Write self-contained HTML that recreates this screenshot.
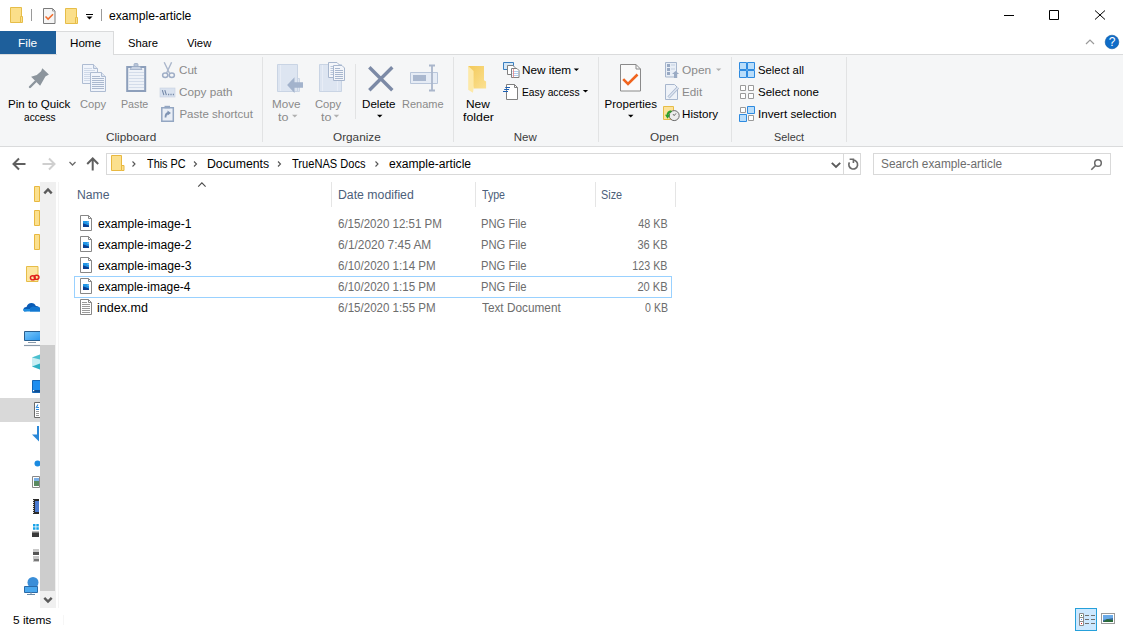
<!DOCTYPE html>
<html><head><meta charset="utf-8">
<style>
html,body{margin:0;padding:0;}
body{width:1125px;height:632px;overflow:hidden;position:relative;background:#fff;font-family:"Liberation Sans",sans-serif;}
.tx{position:absolute;white-space:nowrap;line-height:14px;font-family:"Liberation Sans",sans-serif;}
.a{position:absolute;}
svg{position:absolute;overflow:visible;}
</style></head><body>
<!-- ===== title bar ===== -->
<svg style="left:0;top:0" width="1125" height="31">
  <!-- folder 1 -->
  <path d="M10.5 7.5h11v15h-11z" fill="#fbdf8a" stroke="#e6bd48"/>
  <path d="M20.5 16.5h2v6h-2z" fill="#fbdf8a" stroke="#e6bd48"/>
  <!-- sep -->
  <path d="M31.5 9v12" stroke="#9a9a9a"/>
  <!-- properties -->
  <path d="M43.5 8.5h9l2.5 2.5v12.5h-11.5z" fill="#f5f5f5" stroke="#7a7a7a"/>
  <path d="M52.5 8.5v2.5h2.5" fill="none" stroke="#9a9a9a"/>
  <path d="M45.5 16.5l2.6 2.6 4.9-4.9" fill="none" stroke="#f06a2a" stroke-width="1.5"/>
  <!-- folder 2 -->
  <path d="M65.5 8.5h11v15h-11z" fill="#fbdf8a" stroke="#e6bd48"/>
  <path d="M75.5 17.5h2v6h-2z" fill="#fbdf8a" stroke="#e6bd48"/>
  <!-- dropdown -->
  <path d="M86 14.5h7" stroke="#000"/>
  <path d="M86.5 16.5h6l-3 3z" fill="#000"/>
  <path d="M101.5 9v12" stroke="#9a9a9a"/>
  <!-- window controls -->
  <path d="M1004 15.5h10" stroke="#000"/>
  <path d="M1049.5 10.5h9v9h-9z" fill="none" stroke="#000"/>
  <path d="M1095 10.5l10 9M1105 10.5l-10 9" stroke="#000"/>
</svg>
<!-- ===== tabs ===== -->
<div class="a" style="left:0;top:31px;width:56px;height:23px;background:#1e5f9b"></div>
<div class="a" style="left:56px;top:31px;width:58px;height:24px;background:#f5f6f7;border-top:1px solid #dadbdc;border-right:1px solid #dadbdc;box-sizing:border-box;"></div>
<svg style="left:1080px;top:30px" width="45" height="24">
  <path d="M6 14l4-4 4 4" fill="none" stroke="#9a9a9a" stroke-width="1.2"/>
  <circle cx="32" cy="12" r="6.8" fill="#0f6cc8" stroke="#0a559e" stroke-width="0.6"/>
  <text x="32" y="16.3" font-family="Liberation Sans" font-size="12" fill="#fff" text-anchor="middle">?</text>
</svg>
<!-- ===== ribbon ===== -->
<div class="a" style="left:0;top:54px;width:1123px;height:93px;background:#f5f6f7;border-top:1px solid #dadbdc;border-bottom:1px solid #dadbdc;box-sizing:border-box;"></div>
<div class="a" style="left:57px;top:54px;width:56px;height:1px;background:#f5f6f7"></div>
<!-- group separators -->
<div class="a" style="left:262px;top:57px;width:1px;height:85px;background:#e2e3e4"></div>
<div class="a" style="left:355px;top:64px;width:1px;height:55px;background:#e2e3e4"></div>
<div class="a" style="left:453px;top:57px;width:1px;height:85px;background:#e2e3e4"></div>
<div class="a" style="left:598px;top:57px;width:1px;height:85px;background:#e2e3e4"></div>
<div class="a" style="left:731px;top:57px;width:1px;height:85px;background:#e2e3e4"></div>
<div class="a" style="left:846px;top:57px;width:1px;height:85px;background:#e2e3e4"></div>
<svg style="left:0;top:0" width="1125" height="150">
  <!-- pin -->
  <path d="M42.3 68.2L48.9 74.4L45.4 76.6L42 82.4L40.1 85.7L31.1 76.7L36.8 75L41.1 71.3Z" fill="#8c959d"/>
  <path d="M35.5 81.5L30 87" stroke="#8c959d" stroke-width="2.4" stroke-linecap="round"/>
  <!-- copy -->
  <path d="M82.5 64.5h11l4 4v15h-15z" fill="#f0f4fb" stroke="#aebcd2"/>
  <path d="M93.5 64.5v4h4" fill="#dfe6f1" stroke="#aebcd2"/>
  <path d="M84 68.5h8M84 70.5h11M84 72.5h11M84 74.5h11M84 76.5h11M84 78.5h11M84 80.5h11" stroke="#cfd9e8"/>
  <path d="M90.5 72.5h11l4 4v15h-15z" fill="#f0f4fb" stroke="#aebcd2"/>
  <path d="M101.5 72.5v4h4" fill="#dfe6f1" stroke="#aebcd2"/>
  <path d="M92 76.5h8M92 78.5h12M92 80.5h12M92 82.5h12M92 84.5h12M92 86.5h12M92 88.5h12" stroke="#aab8ce"/>
  <!-- paste -->
  <path d="M127.2 67h18v24h-18z" fill="#eef2f8" stroke="#8d9fbb" stroke-width="2"/>
  <path d="M128.5 72.5h15.5M128.5 75.5h15.5M128.5 78.5h15.5M128.5 81.5h15.5M128.5 84.5h15.5M128.5 87.5h15.5" stroke="#d3dcea"/>
  <path d="M130 69.5L132 66.5H140L142 69.5z" fill="#c9d3e3" stroke="#9aabc4" stroke-width="0.8"/>
  <path d="M134 66.5v-2a1 1 0 0 1 1-1h2a1 1 0 0 1 1 1v2z" fill="#b7c4d8" stroke="#9aabc4" stroke-width="0.8"/>
  <!-- cut -->
  <path d="M164.2 62.2l5.2 10.8M171.6 62.2l-5 10.8" stroke="#aab6cb" stroke-width="1.4"/>
  <ellipse cx="165.2" cy="75.2" rx="2.6" ry="2.2" fill="none" stroke="#9eadc6" stroke-width="1.5"/>
  <ellipse cx="171.8" cy="75.2" rx="2.6" ry="2.2" fill="none" stroke="#9eadc6" stroke-width="1.5"/>
  <!-- copy path -->
  <rect x="160" y="88" width="15" height="9" fill="#d9e2ef" stroke="#c5d1e2" stroke-width="0.6"/>
  <path d="M162.3 90.2l1.6 5M164.8 90.2l1.6 5" stroke="#7488a8" stroke-width="1.1"/>
  <path d="M168 94.5h1.2M170.4 94.5h1.2M172.8 94.5h1.2" stroke="#7488a8" stroke-width="1.3"/>
  <!-- paste shortcut -->
  <path d="M161.8 107.8h11.5v13.5h-11.5z" fill="#e9eef6" stroke="#93a6c2" stroke-width="1.5"/>
  <path d="M164.5 105.8h5.5v2.5h-5.5z" fill="#93a6c2"/>
  <path d="M165.5 117.5c0-3 1-4.5 3.5-4.5" fill="none" stroke="#7e93b3" stroke-width="1.8"/>
  <path d="M167.5 110.5l3.5 2.5-3.5 2.5z" fill="#7e93b3"/>
  <!-- move to -->
  <path d="M297.5 78.5h2v13h-2z" fill="#dfe6f1" stroke="#ccd6e5"/>
  <path d="M277.5 64.5h20v27h-20z" fill="#dde5f1" stroke="#c9d4e4"/>
  <path d="M280.5 65v26" stroke="#e8edf6"/>
  <path d="M287.1 85L294.5 77.2V82.2H303V87.7H294.5V93z" fill="#a3b3cc"/>
  <!-- copy to -->
  <path d="M319.5 64.5h22v27h-22z" fill="#dde5f1" stroke="#c9d4e4"/>
  <path d="M322.5 65v26M337.5 65v26" stroke="#e8edf6"/>
  <path d="M328.5 62.5h8.5l2.5 2.5v12.5h-11z" fill="#f4f6fa" stroke="#a8b7ce"/>
  <path d="M330.5 66.5h4M330.5 68.5h4M330.5 70.5h4M330.5 72.5h4M330.5 74.5h4" stroke="#b9c6da"/>
  <path d="M333.5 65.5h8.5l2.5 2.5v12.5h-11z" fill="#f4f6fa" stroke="#a8b7ce"/>
  <path d="M335 68.5h5M335 70.5h8M335 72.5h8M335 74.5h8M335 76.5h8M335 78.5h8" stroke="#a8b7ce"/>
  <path d="M292 114.8h5.5l-2.75 2.7z" fill="#b0b0b0"/>
  <path d="M333.7 114.8h5.5l-2.75 2.7z" fill="#b0b0b0"/>
  <!-- delete -->
  <path d="M369.3 67.2l23 23M392.3 67.2l-23 23" stroke="#7c8aa6" stroke-width="3.4"/>
  <path d="M377 114.8h5.5l-2.75 2.7z" fill="#000"/>
  <!-- rename -->
  <path d="M410.5 72.5h27v11h-27z" fill="#e6ecf5" stroke="#b9c6da"/>
  <path d="M413 75h13v6h-13z" fill="#aab8cf"/>
  <path d="M432 65.5v25M429 65.5h6M429 90.5h6" stroke="#aab6cb" stroke-width="1.8"/>
  <!-- new folder -->
  <defs><linearGradient id="fg" x1="0" y1="0" x2="1" y2="1"><stop offset="0" stop-color="#f3c95a"/><stop offset="1" stop-color="#fbe192"/></linearGradient></defs>
  <path d="M468.2 66H484V80.3L486.1 81.5V88.6H473.6z" fill="url(#fg)"/>
  <path d="M468.2 66L473.6 71V88.6L472.9 92.8L468.2 89.7z" fill="#fde9a8"/>
  <!-- new item -->
  <path d="M503.5 62.5h10v7h-10z" fill="#d5e8f8" stroke="#3a7fc0"/>
  <path d="M507.5 65.5h5.5l2 2v7h-7.5z" fill="#fff" stroke="#808080"/>
  <path d="M511.5 68.5h5.5l2 2v7h-7.5z" fill="#fff" stroke="#808080"/>
  <path d="M512.5 71.5h6M512.5 73.5h6M512.5 75.5h6" stroke="#9cc0e8" stroke-width="0.8"/>
  <path d="M513.5 69v8.5" stroke="#e88080" stroke-width="0.8"/>
  <path d="M573.7 68.4h5.3l-2.65 2.6z" fill="#000"/>
  <!-- easy access -->
  <path d="M506.5 84.5h8l3 3v12h-11z" fill="#fff" stroke="#808080"/>
  <path d="M514.5 84.5v3h3" fill="none" stroke="#808080"/>
  <path d="M505.3 87.5h4.7M504.2 89.5h4.9M503 91.5h5" stroke="#1a5fb4" stroke-width="1"/>
  <path d="M582.8 90h5.3l-2.65 2.6z" fill="#000"/>
  <!-- properties -->
  <path d="M620.5 64.5h15.5l4.5 4.5v22h-20z" fill="#fafafa" stroke="#8a8a8a"/>
  <path d="M636 64.5v4.5h4.5" fill="none" stroke="#8a8a8a"/>
  <path d="M623.2 79.2L628 84L637.5 74.5" fill="none" stroke="#f0641e" stroke-width="2.6"/>
  <path d="M628 114.8h5.5l-2.75 2.7z" fill="#000"/>
  <!-- open -->
  <path d="M665.5 62.5h11v14.5h-11z" fill="#e8eef6" stroke="#a7b6cd"/>
  <path d="M667 64h3v3h-3zM667 68h3v3h-3zM667 72h3v3h-3z" fill="#98a9c3"/>
  <path d="M671 65h4M671 69h4" stroke="#c3cfe0"/>
  <path d="M674 78v-4h-2l3.6-3 3.6 3h-2v4z" fill="#9aabc4"/>
  <path d="M716 68.4h5.3l-2.65 2.6z" fill="#b0b0b0"/>
  <!-- edit -->
  <path d="M665.5 84.5h9l3 3v12h-12z" fill="#eef2f8" stroke="#a7b6cd"/>
  <path d="M668.5 97.5l9.5-10" stroke="#a7b6cd" stroke-width="3"/><path d="M668.5 97.5l9.5-10" stroke="#dfe6f1" stroke-width="1.4"/>
  <!-- history -->
  <path d="M663.5 106.5h10v13h-10z" fill="#fde39a" stroke="#e6bd48"/>
  <circle cx="674.2" cy="115.6" r="5" fill="#ececec" stroke="#6a6a6a"/>
  <path d="M674.2 115.6l1.8-2.2M674.2 115.6l-1.2-1.5" stroke="#444" stroke-width="0.8"/>
  <path d="M671.5 111.2c-2.5.3-4 2-4 4.3" fill="none" stroke="#2ca02c" stroke-width="2"/>
  <path d="M665 114.8h5.2l-2.6 4z" fill="#2ca02c"/>
  <!-- select all -->
  <path d="M739.5 62.5h7v7h-7zM747.5 62.5h7v7h-7zM739.5 70.5h7v7h-7zM747.5 70.5h7v7h-7z" fill="#b9ddfa" stroke="#2d8ae0"/>
  <!-- select none -->
  <path d="M740.5 85.5h5v5h-5zM748.5 85.5h5v5h-5zM740.5 93.5h5v5h-5zM748.5 93.5h5v5h-5z" fill="#fff" stroke="#9a9a9a"/>
  <!-- invert -->
  <path d="M740.5 107.5h5v5h-5zM748.5 115.5h5v5h-5z" fill="#fff" stroke="#9a9a9a"/>
  <path d="M747.5 106.5h7v7h-7zM739.5 114.5h7v7h-7z" fill="#b9ddfa" stroke="#2d8ae0"/>
</svg>
<!-- ===== address row ===== -->
<svg style="left:0;top:146px" width="1125" height="40">
  <path d="M13.5 18h12M19 12.5L13.5 18l5.5 5.5" fill="none" stroke="#5f5f5f" stroke-width="2"/>
  <path d="M42.5 18h12M49 12.5l5.5 5.5-5.5 5.5" fill="none" stroke="#cfcfcf" stroke-width="2"/>
  <path d="M69.5 16l3 3 3-3" fill="none" stroke="#6a6a6a" stroke-width="1.3"/>
  <path d="M92.7 24.5V12.5M87.2 18l5.5-5.5 5.5 5.5" fill="none" stroke="#5f5f5f" stroke-width="2"/>
  <!-- address box -->
  <rect x="106.5" y="7.5" width="754" height="21" fill="#fff" stroke="#d9d9d9"/>
  <path d="M843.5 7.5v21" stroke="#d9d9d9"/>
  <path d="M111.5 9.5h10v15h-10z" fill="#fbe08e" stroke="#e8b840"/>
  <path d="M121.5 19.5h2.5v5h-2.5z" fill="#fbe08e" stroke="#e8b840"/>
  <path d="M132.5 15.5l2.5 2.5-2.5 2.5M194 15.5l2.5 2.5-2.5 2.5M278 15.5l2.5 2.5-2.5 2.5M375.5 15.5l2.5 2.5-2.5 2.5" fill="none" stroke="#555" stroke-width="1.1"/>
  <path d="M831.8 16.8l4.2 4.2 4.2-4.2" fill="none" stroke="#5a5a5a" stroke-width="1.9"/>
  <path d="M853.2 14.2A4.4 4.4 0 1 1 849.4 16.4" fill="none" stroke="#6a6a6a" stroke-width="1.7"/>
  <path d="M849.6 13.3H853.4V17" fill="none" stroke="#6a6a6a" stroke-width="1.6"/>
  <!-- search box -->
  <rect x="873.5" y="7.5" width="237" height="21" fill="#fff" stroke="#d9d9d9"/>
  <circle cx="1098" cy="17" r="3.3" fill="none" stroke="#6a6a6a" stroke-width="1.5"/>
  <path d="M1095.6 19.5l-4.3 4.3" stroke="#6a6a6a" stroke-width="1.6"/>
</svg>
<!-- ===== nav pane ===== -->
<div class="a" style="left:0;top:398px;width:40px;height:24px;background:#d9d9d9"></div>
<div class="a" style="left:40px;top:182px;width:16px;height:426px;background:#f0f0f0"></div>
<div class="a" style="left:40px;top:345px;width:15px;height:246px;background:#cdcdcd"></div>
<div class="a" style="left:58px;top:182px;width:1px;height:426px;background:#f4f4f4"></div>
<svg style="left:0;top:0" width="60" height="632">
  <path d="M44.3 193.3l3.7-3.8 3.7 3.8" fill="none" stroke="#5a5a5a" stroke-width="2.4"/>
  <path d="M44.3 597.8l3.7 3.8 3.7-3.8" fill="none" stroke="#5a5a5a" stroke-width="2.4"/>
</svg>
<svg style="left:0;top:0;overflow:hidden" width="40" height="632">
  <path d="M34.5 186.5h5v15h-5zM34.5 210.5h5v15h-5zM34.5 234.5h5v15h-5z" fill="#fbe08e" stroke="#e8b840"/>
  <!-- creative cloud -->
  <path d="M26.5 266.5h11.5v15h-11.5z" fill="#fde6a0" stroke="#e6bd48"/>
  <ellipse cx="32.8" cy="277.8" rx="2.4" ry="2.1" fill="none" stroke="#e0201c" stroke-width="1.4"/>
  <ellipse cx="36.6" cy="277.3" rx="2.4" ry="2.1" fill="none" stroke="#e0201c" stroke-width="1.4"/>
  <!-- onedrive -->
  <path d="M24.5 311.5c-1-.3-1.2-1.5-1-2.5.3-1.4 1.5-2.2 3-2.1.8-2.4 2.6-3.8 5-3.8 2.1 0 3.6 1.1 4.4 2.8 1.8-.1 3.6.9 4.1 2.9z" fill="#0a5bb5"/>
  <path d="M24.5 311.5c-1-.3-1.3-1.4-1-2.5h17v2.5z" fill="#1c8de0"/>
  <path d="M30 308c1.5-1.5 4-2 6-1 2-.5 4 0 5 2v2.5h-11z" fill="#1477d0"/>
  <!-- this pc -->
  <defs><linearGradient id="pcg" x1="0" y1="0" x2="1" y2="1"><stop offset="0" stop-color="#7cc8fa"/><stop offset="1" stop-color="#2896ee"/></linearGradient></defs>
  <path d="M24.5 331.5h16v9h-16z" fill="url(#pcg)" stroke="#2a5f8f"/>
  <path d="M28 342.5h8" stroke="#8a9aaa"/>
  <path d="M24 345.5h16" stroke="#8a9aaa" stroke-width="1.2"/>
  <!-- 3d objects -->
  <path d="M32 357.5L40 354.5V369.5L32 366.5z" fill="#c8eef3"/>
  <path d="M32 357.5L40 354.5V359.5z" fill="#4cc0cf"/>
  <path d="M32 366.5L40 363.5V369.5z" fill="#2eb0c4"/>
  <!-- desktop -->
  <path d="M32.5 380.5h8v12h-8z" fill="#1e8ef0" stroke="#1565b5"/>
  <path d="M33 390h7v2h-7z" fill="#0d4f95"/>
  <rect x="33" y="390" width="1.2" height="1.2" fill="#fff"/>
  <!-- documents -->
  <path d="M34.5 402.5h6v15h-6z" fill="#fff" stroke="#6a6a6a"/>
  <path d="M36 408l2-3.5M37 407.5h2" stroke="#2a8ae0" stroke-width="1.1"/>
  <path d="M36 409.5h3" stroke="#2a8ae0"/>
  <path d="M36 411.5h3M36 413.5h3M36 415.5h3" stroke="#9a9a9a"/>
  <!-- downloads -->
  <path d="M32 434.5h7v7z" fill="#2b88d8"/><path d="M37 426h2v9h-2z" fill="#2b88d8"/>
  <!-- music -->
  <circle cx="37.5" cy="463.5" r="3" fill="#1a8ae0"/>
  <!-- pictures -->
  <path d="M32.5 476.5h7v11h-7z" fill="#fff" stroke="#888"/>
  <path d="M34 478h5v8h-5z" fill="#5a8a60"/>
  <path d="M34 478h5v3h-5z" fill="#7ab0e8"/>
  <!-- videos -->
  <path d="M33 499h6v15h-6z" fill="#2a2a2a"/>
  <path d="M35 501h4v11h-4z" fill="#4a7ad0"/>
  <path d="M33.5 500v13" stroke="#ddd" stroke-dasharray="1 1"/>
  <!-- windows drive -->
  <path d="M33 524h2.5v2.5H33zM36.3 524h2.5v2.5h-2.5zM33 527.3h2.5v2.5H33zM36.3 527.3h2.5v2.5h-2.5z" fill="#19a3e8"/>
  <path d="M32 531h7v6h-7z" fill="#3a3a3a"/>
  <path d="M32 531h7v1.5h-7z" fill="#bbb"/>
  <!-- drive 2 -->
  <path d="M33 549h6v6h-6z" fill="#c8c8c8"/>
  <path d="M33 552h6v3h-6z" fill="#555"/>
  <path d="M33 556h6v6h-6z" fill="#c8c8c8"/>
  <path d="M34 559h5v2h-5z" fill="#777"/>
  <!-- network -->
  <circle cx="33" cy="582.5" r="5.5" fill="#3a8ed8"/>
  <path d="M24.5 586.5h13v6h-13z" fill="#4aa8ee" stroke="#2a6aa8"/>
  <path d="M27 594.5h8M31 592v2.5" stroke="#6a8aa8"/>
</svg>
<!-- ===== column headers ===== -->
<div class="a" style="left:331px;top:182px;width:1px;height:25px;background:#e5e5e5"></div>
<div class="a" style="left:475px;top:182px;width:1px;height:25px;background:#e5e5e5"></div>
<div class="a" style="left:595px;top:182px;width:1px;height:25px;background:#e5e5e5"></div>
<div class="a" style="left:675px;top:182px;width:1px;height:25px;background:#e5e5e5"></div>
<svg style="left:0;top:0" width="700" height="320">
  <path d="M198.2 186.6l3.7-3.7 3.7 3.7" fill="none" stroke="#4a4a4a" stroke-width="1.1"/>
  <!-- selection focus rect row 4 -->
  <rect x="74.5" y="276.5" width="597" height="21" fill="none" stroke="#99d1ff"/>
  <!-- image file icons -->
  <g id="ficon">
    <path d="M80.5 215.5h8l3 3v12h-11z" fill="#fff" stroke="#878787"/>
    <path d="M88.5 215.5v3h3" fill="none" stroke="#878787"/>
    <rect x="83" y="221" width="6" height="6" fill="#2196e6"/>
    <path d="M83 223.3L89 225.5V227H83z" fill="#0b3f92"/>
    <rect x="87.6" y="221.6" width="1" height="1" fill="#dff0ff"/>
  </g>
  <use href="#ficon" y="21"/>
  <use href="#ficon" y="42"/>
  <use href="#ficon" y="63"/>
  <!-- text icon -->
  <path d="M80.5 299.5h8l3 3v12h-11z" fill="#fff" stroke="#878787"/>
  <path d="M88.5 299.5v3h3" fill="none" stroke="#878787"/>
  <path d="M82 302.5h5M82 304.5h8M82 306.5h8M82 308.5h8M82 310.5h8M82 312.5h8" stroke="#9a9a9a"/>
</svg>
<!-- ===== status bar ===== -->
<div class="a" style="left:63px;top:615px;width:1px;height:10px;background:#f6f6f6"></div>
<div class="a" style="left:1075px;top:608px;width:22px;height:23px;background:#cce8ff;border:1px solid #26a0da;box-sizing:border-box"></div>
<svg style="left:0;top:0" width="1125" height="632">
  <path d="M1079.5 613.5h4v12h-4z" fill="#fff" stroke="#8a8a8a"/>
  <path d="M1079.5 617.5h4M1079.5 621.5h4" stroke="#8a8a8a"/><rect x="1081" y="615" width="1" height="1" fill="#2e7d4a"/><rect x="1081" y="619" width="1" height="1" fill="#4a8ef0"/><rect x="1081" y="623" width="1" height="1" fill="#e02020"/>
  <path d="M1085 615.5h4M1091 615.5h4M1085 619.5h4M1091 619.5h4M1085 623.5h4M1091 623.5h4" stroke="#707070"/>
  <rect x="1101.5" y="613.5" width="13" height="10" fill="#fff" stroke="#9a9a9a"/>
  <rect x="1103" y="615" width="10" height="7" fill="#3a6aa0"/>
  <path d="M1103 615h10v3l-10 2z" fill="#6aaae8"/>
  <path d="M1103 622l4-3 6 1v2z" fill="#2a6a3a"/>
</svg>
<div class="tx" style="top:9.34px;font-size:12px;color:#000;left:109.30px;transform-origin:0 50%;transform:scaleX(1.0123);">example-article</div>
<div class="tx" style="top:36.02px;font-size:11.5px;color:#fff;left:18.16px;transform-origin:0 50%;transform:scaleX(1.0353);">File</div>
<div class="tx" style="top:36.02px;font-size:11.5px;color:#000;left:69.99px;transform-origin:0 50%;transform:scaleX(1.0103);">Home</div>
<div class="tx" style="top:36.02px;font-size:11.5px;color:#000;left:128.22px;transform-origin:0 50%;transform:scaleX(0.9759);">Share</div>
<div class="tx" style="top:36.02px;font-size:11.5px;color:#000;left:187.30px;transform-origin:0 50%;transform:scaleX(0.9840);">View</div>
<div class="tx" style="top:97.02px;font-size:11.5px;color:#000;left:8.19px;transform-origin:0 50%;transform:scaleX(1.0066);">Pin to Quick</div>
<div class="tx" style="top:110.02px;font-size:11.5px;color:#000;left:23.50px;transform-origin:0 50%;transform:scaleX(0.8800);">access</div>
<div class="tx" style="top:97.02px;font-size:11.5px;color:#8a8a8a;left:79.53px;transform-origin:0 50%;transform:scaleX(0.9731);">Copy</div>
<div class="tx" style="top:97.02px;font-size:11.5px;color:#8a8a8a;left:121.07px;transform-origin:0 50%;transform:scaleX(0.9286);">Paste</div>
<div class="tx" style="top:62.72px;font-size:11.5px;color:#8a8a8a;left:179.39px;transform-origin:0 50%;transform:scaleX(1.0118);">Cut</div>
<div class="tx" style="top:84.52px;font-size:11.5px;color:#8a8a8a;left:179.38px;transform-origin:0 50%;transform:scaleX(1.0216);">Copy path</div>
<div class="tx" style="top:106.52px;font-size:11.5px;color:#8a8a8a;left:179.40px;transform-origin:0 50%;">Paste shortcut</div>
<div class="tx" style="top:129.52px;font-size:11.5px;color:#3c3c3c;left:105.78px;transform-origin:0 50%;transform:scaleX(1.0208);">Clipboard</div>
<div class="tx" style="top:97.02px;font-size:11.5px;color:#8a8a8a;left:272.39px;transform-origin:0 50%;transform:scaleX(1.0148);">Move</div>
<div class="tx" style="top:110.02px;font-size:11.5px;color:#8a8a8a;left:278.00px;transform-origin:0 50%;transform:scaleX(1.0889);">to</div>
<div class="tx" style="top:97.02px;font-size:11.5px;color:#8a8a8a;left:315.42px;transform-origin:0 50%;transform:scaleX(0.9769);">Copy</div>
<div class="tx" style="top:110.02px;font-size:11.5px;color:#8a8a8a;left:320.50px;transform-origin:0 50%;transform:scaleX(1.0889);">to</div>
<div class="tx" style="top:97.02px;font-size:11.5px;color:#000;left:362.39px;transform-origin:0 50%;transform:scaleX(1.0094);">Delete</div>
<div class="tx" style="top:97.02px;font-size:11.5px;color:#8a8a8a;left:402.34px;transform-origin:0 50%;transform:scaleX(0.9571);">Rename</div>
<div class="tx" style="top:129.52px;font-size:11.5px;color:#3c3c3c;left:333.38px;transform-origin:0 50%;transform:scaleX(1.0222);">Organize</div>
<div class="tx" style="top:97.02px;font-size:11.5px;color:#000;left:466.36px;transform-origin:0 50%;transform:scaleX(1.0364);">New</div>
<div class="tx" style="top:110.02px;font-size:11.5px;color:#000;left:462.90px;transform-origin:0 50%;transform:scaleX(1.0724);">folder</div>
<div class="tx" style="top:62.72px;font-size:11.5px;color:#000;left:522.28px;transform-origin:0 50%;transform:scaleX(1.0239);">New item</div>
<div class="tx" style="top:84.52px;font-size:11.5px;color:#000;left:522.41px;transform-origin:0 50%;transform:scaleX(0.8921);">Easy access</div>
<div class="tx" style="top:129.52px;font-size:11.5px;color:#3c3c3c;left:513.70px;transform-origin:0 50%;">New</div>
<div class="tx" style="top:97.02px;font-size:11.5px;color:#000;left:604.60px;transform-origin:0 50%;">Properties</div>
<div class="tx" style="top:62.72px;font-size:11.5px;color:#8a8a8a;left:682.46px;transform-origin:0 50%;transform:scaleX(1.0370);">Open</div>
<div class="tx" style="top:84.52px;font-size:11.5px;color:#8a8a8a;left:682.48px;transform-origin:0 50%;transform:scaleX(1.0158);">Edit</div>
<div class="tx" style="top:106.52px;font-size:11.5px;color:#000;left:682.49px;transform-origin:0 50%;transform:scaleX(1.0086);">History</div>
<div class="tx" style="top:129.52px;font-size:11.5px;color:#3c3c3c;left:649.57px;transform-origin:0 50%;transform:scaleX(1.0259);">Open</div>
<div class="tx" style="top:62.72px;font-size:11.5px;color:#000;left:758.22px;transform-origin:0 50%;transform:scaleX(0.9844);">Select all</div>
<div class="tx" style="top:84.52px;font-size:11.5px;color:#000;left:758.20px;transform-origin:0 50%;transform:scaleX(1.0034);">Select none</div>
<div class="tx" style="top:106.52px;font-size:11.5px;color:#000;left:758.19px;transform-origin:0 50%;transform:scaleX(1.0145);">Invert selection</div>
<div class="tx" style="top:129.52px;font-size:11.5px;color:#3c3c3c;left:773.56px;transform-origin:0 50%;transform:scaleX(0.9419);">Select</div>
<div class="tx" style="top:156.84px;font-size:12px;color:#000;left:146.60px;transform-origin:0 50%;transform:scaleX(0.9071);">This PC</div>
<div class="tx" style="top:156.84px;font-size:12px;color:#000;left:206.98px;transform-origin:0 50%;transform:scaleX(1.0237);">Documents</div>
<div class="tx" style="top:156.84px;font-size:12px;color:#000;left:292.00px;transform-origin:0 50%;transform:scaleX(0.9241);">TrueNAS Docs</div>
<div class="tx" style="top:156.84px;font-size:12px;color:#000;left:389.30px;transform-origin:0 50%;transform:scaleX(1.0086);">example-article</div>
<div class="tx" style="top:156.84px;font-size:12px;color:#6d6d6d;left:881.11px;transform-origin:0 50%;transform:scaleX(0.9868);">Search example-article</div>
<div class="tx" style="top:187.64px;font-size:12px;color:#4c607a;left:77.38px;transform-origin:0 50%;transform:scaleX(1.0161);">Name</div>
<div class="tx" style="top:187.64px;font-size:12px;color:#4c607a;left:337.68px;transform-origin:0 50%;transform:scaleX(1.0236);">Date modified</div>
<div class="tx" style="top:187.64px;font-size:12px;color:#4c607a;left:482.00px;transform-origin:0 50%;transform:scaleX(0.8846);">Type</div>
<div class="tx" style="top:187.64px;font-size:12px;color:#4c607a;left:601.10px;transform-origin:0 50%;transform:scaleX(0.9045);">Size</div>
<div class="tx" style="top:216.64px;font-size:12px;color:#000;left:98.20px;transform-origin:0 50%;transform:scaleX(1.0087);">example-image-1</div>
<div class="tx" style="top:216.64px;font-size:12px;color:#6d6d6d;left:337.74px;transform-origin:0 50%;transform:scaleX(0.9613);">6/15/2020 12:51 PM</div>
<div class="tx" style="top:216.64px;font-size:12px;color:#6d6d6d;left:481.07px;transform-origin:0 50%;transform:scaleX(0.9340);">PNG File</div>
<div class="tx" style="top:216.64px;font-size:12px;color:#6d6d6d;right:456.87px;transform-origin:100% 50%;transform:scaleX(0.8969);">48 KB</div>
<div class="tx" style="top:237.64px;font-size:12px;color:#000;left:98.20px;transform-origin:0 50%;transform:scaleX(1.0087);">example-image-2</div>
<div class="tx" style="top:237.64px;font-size:12px;color:#6d6d6d;left:337.71px;transform-origin:0 50%;transform:scaleX(0.9913);">6/1/2020 7:45 AM</div>
<div class="tx" style="top:237.64px;font-size:12px;color:#6d6d6d;left:481.07px;transform-origin:0 50%;transform:scaleX(0.9340);">PNG File</div>
<div class="tx" style="top:237.64px;font-size:12px;color:#6d6d6d;right:456.85px;transform-origin:100% 50%;transform:scaleX(0.9258);">36 KB</div>
<div class="tx" style="top:258.64px;font-size:12px;color:#000;left:98.20px;transform-origin:0 50%;transform:scaleX(1.0087);">example-image-3</div>
<div class="tx" style="top:258.64px;font-size:12px;color:#6d6d6d;left:337.74px;transform-origin:0 50%;transform:scaleX(0.9630);">6/10/2020 1:14 PM</div>
<div class="tx" style="top:258.64px;font-size:12px;color:#6d6d6d;left:481.07px;transform-origin:0 50%;transform:scaleX(0.9340);">PNG File</div>
<div class="tx" style="top:258.64px;font-size:12px;color:#6d6d6d;right:457.17px;transform-origin:100% 50%;transform:scaleX(0.8895);">123 KB</div>
<div class="tx" style="top:279.64px;font-size:12px;color:#000;left:98.20px;transform-origin:0 50%;transform:scaleX(0.9978);">example-image-4</div>
<div class="tx" style="top:279.64px;font-size:12px;color:#6d6d6d;left:337.74px;transform-origin:0 50%;transform:scaleX(0.9630);">6/10/2020 1:15 PM</div>
<div class="tx" style="top:279.64px;font-size:12px;color:#6d6d6d;left:481.07px;transform-origin:0 50%;transform:scaleX(0.9340);">PNG File</div>
<div class="tx" style="top:279.64px;font-size:12px;color:#6d6d6d;right:456.85px;transform-origin:100% 50%;transform:scaleX(0.9258);">20 KB</div>
<div class="tx" style="top:300.64px;font-size:12px;color:#000;left:97.15px;transform-origin:0 50%;transform:scaleX(1.0468);">index.md</div>
<div class="tx" style="top:300.64px;font-size:12px;color:#6d6d6d;left:337.74px;transform-origin:0 50%;transform:scaleX(0.9630);">6/15/2020 1:55 PM</div>
<div class="tx" style="top:300.64px;font-size:12px;color:#6d6d6d;left:482.00px;transform-origin:0 50%;transform:scaleX(0.9838);">Text Document</div>
<div class="tx" style="top:300.64px;font-size:12px;color:#6d6d6d;right:456.61px;transform-origin:100% 50%;transform:scaleX(0.8800);">0 KB</div>
<div class="tx" style="top:612.72px;font-size:11.5px;color:#000;left:13.47px;transform-origin:0 50%;transform:scaleX(1.0333);">5 items</div>
</body></html>
